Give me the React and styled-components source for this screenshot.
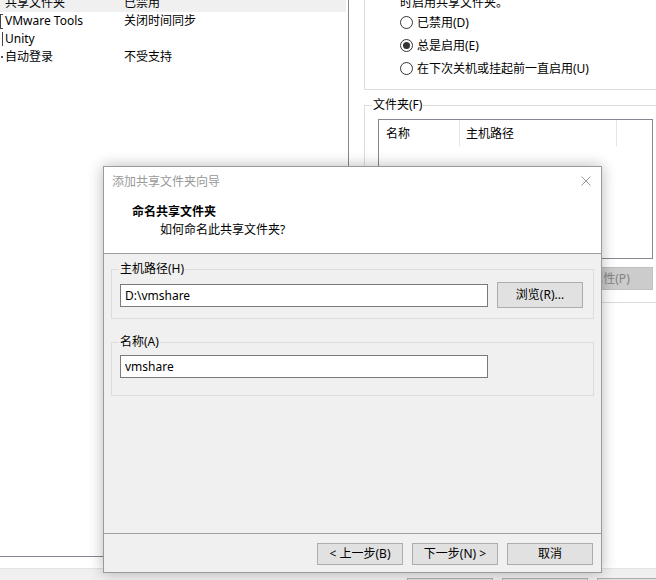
import React from 'react';
import styled, { createGlobalStyle } from 'styled-components';

const GlobalStyle = createGlobalStyle`
  html, body {
    margin: 0;
    padding: 0;
    background: #ffffff;
  }
  body {
    font-family: "Noto Sans", "Noto Sans CJK SC", sans-serif;
    font-size: 12px;
    color: #000000;
    overflow: hidden;
  }
`;

const Screen = styled.div`
  position: relative;
  width: 656px;
  height: 580px;
  overflow: hidden;
  background: #ffffff;
  display: flex;
  flex-direction: column;
`;

const Workspace = styled.div`
  display: flex;
  height: 568px;
`;

const SidePane = styled.div`
  width: 349px;
  height: 557px;
  box-sizing: border-box;
  border-right: 1px solid #828790;
  border-bottom: 1px solid #828790;
  overflow: hidden;
`;

// list is scrolled a little, the first row is partly hidden
const SettingList = styled.div`
  margin-top: -6px;
`;

const SettingRow = styled.div`
  display: flex;
  align-items: center;
  width: 346px;
  height: 18px;
  line-height: 18px;
  background: ${(p) => (p.$selected ? '#f0f0f0' : 'transparent')};
`;

const Marker = styled.span`
  flex: none;
  width: 5px;
  height: 18px;
  display: flex;
  align-items: center;

  &::before {
    content: '';
    display: block;
    box-sizing: border-box;
    ${(p) =>
      p.$kind === 'bracket' &&
      'width: 3px; height: 15px; border: 1px solid #444; border-right: none;'}
    ${(p) =>
      p.$kind === 'line' &&
      'width: 1px; height: 14px; margin-left: 2px; background: #444;'}
    ${(p) =>
      p.$kind === 'dot' &&
      'width: 2px; height: 2px; margin-left: 1px; background: #555;'}
  }
`;

const SettingName = styled.span`
  width: 119px;
  white-space: nowrap;
`;

const SettingValue = styled.span`
  white-space: nowrap;
`;

const DetailPane = styled.div`
  flex: 1;
  padding-left: 15px;
  overflow: hidden;
`;

const OptionGroup = styled.div`
  width: 320px;
  margin-top: -20px;
  padding: 14px 0 9px 35px;
  border: 1px solid #dcdcdc;
  line-height: 16px;
`;

const RadioRow = styled.div`
  display: flex;
  align-items: center;
  height: 23px;
  white-space: nowrap;
`;

const RadioCircle = styled.span`
  flex: none;
  box-sizing: border-box;
  width: 13px;
  height: 13px;
  margin-right: 4px;
  border: 1px solid #333333;
  border-radius: 50%;
  background: #ffffff;
  display: flex;
  align-items: center;
  justify-content: center;

  &::after {
    content: '';
    width: 7px;
    height: 7px;
    border-radius: 50%;
    background: ${(p) => (p.$checked ? '#333333' : 'transparent')};
  }
`;

const GroupBox = styled.fieldset`
  margin: ${(p) => p.$gap || 0}px 0 0 0;
  padding: ${(p) => p.$pad};
  min-width: 0;
  border: 1px solid #dcdcdc;
  width: ${(p) => p.$width || 'auto'};
  box-sizing: border-box;
`;

const GroupLabel = styled.legend`
  margin-left: ${(p) => p.$offset}px;
  padding: 0 1px;
  line-height: 16px;
`;

const ListView = styled.div`
  width: 275px;
  height: 140px;
  box-sizing: border-box;
  border: 1px solid #828790;
  background: #ffffff;
`;

const ListHeader = styled.div`
  display: grid;
  grid-template-columns: 81px 157px 1fr;
  height: 26px;
`;

const HeaderCell = styled.div`
  display: flex;
  align-items: center;
  padding-left: ${(p) => p.$indent || 0}px;
  border-right: ${(p) => (p.$last ? 'none' : '1px solid #e5e5e5')};
`;

const ListActions = styled.div`
  width: 275px;
  display: flex;
  justify-content: flex-end;
  margin-top: 8px;
`;

const WinButton = styled.button`
  box-sizing: border-box;
  width: ${(p) => p.$w || 86}px;
  height: ${(p) => p.$h || 22}px;
  padding: 0;
  font: inherit;
  line-height: 1;
  color: ${(p) => (p.$disabled ? '#838383' : '#000000')};
  background: ${(p) => (p.$disabled ? '#cccccc' : '#e1e1e1')};
  border: 1px solid ${(p) => (p.$disabled ? '#bfbfbf' : '#adadad')};
  flex: none;
`;

const TaskStrip = styled.div`
  height: 12px;
  box-sizing: border-box;
  border-top: 1px solid #e3e3e3;
  background: #f0f0f0;
  padding: 9px 0 0 407px;
  display: flex;
  gap: 9px;
`;

const Dialog = styled.div`
  position: absolute;
  left: 103px;
  top: 166px;
  width: 499px;
  height: 407px;
  box-sizing: border-box;
  border: 1px solid #9a9a9a;
  background: #f0f0f0;
  box-shadow: 0 0 14px rgba(0, 0, 0, 0.28);
  display: flex;
  flex-direction: column;
`;

const TitleBar = styled.div`
  height: 28px;
  flex: none;
  display: flex;
  align-items: center;
  justify-content: space-between;
  padding: 0 10px 1px 8px;
  background: #ffffff;
  color: #999999;
`;

const WizardHeader = styled.div`
  height: 58px;
  flex: none;
  box-sizing: border-box;
  padding: 7px 0 0 28px;
  background: #ffffff;
  border-bottom: 1px solid #a0a0a0;
  line-height: 18px;
`;

const StepTitle = styled.div`
  font-weight: bold;
`;

const StepHint = styled.div`
  padding-left: 28px;
`;

const WizardBody = styled.div`
  flex: 1;
  padding: 7px 7px 0 7px;
`;

const FieldRow = styled.div`
  display: flex;
  align-items: center;
  gap: 9px;
  height: 26px;
`;

const TextBox = styled.input`
  box-sizing: border-box;
  width: 368px;
  height: 23px;
  margin: 0;
  padding: 0 4px;
  border: 1px solid #7a7a7a;
  background: #ffffff;
  font: inherit;
  color: #000000;
  outline: none;
`;

const WizardFooter = styled.div`
  height: 39px;
  flex: none;
  box-sizing: border-box;
  border-top: 1px solid #a0a0a0;
  padding: 9px 8px 0 0;
  display: flex;
  justify-content: flex-end;
  gap: 9px;
`;

const CloseIcon = () => (
  <svg width="10" height="10" viewBox="0 0 10 10">
    <path d="M0.5 0.5 L9.5 9.5 M9.5 0.5 L0.5 9.5" stroke="#999999" strokeWidth="1" fill="none" />
  </svg>
);

const settings = [
  { name: '共享文件夹', value: '已禁用', selected: true },
  { name: 'VMware Tools', value: '关闭时间同步', marker: 'bracket' },
  { name: 'Unity', value: '', marker: 'line' },
  { name: '自动登录', value: '不受支持', marker: 'dot' },
];

const shareModes = [
  { label: '已禁用(D)' },
  { label: '总是启用(E)', checked: true },
  { label: '在下次关机或挂起前一直启用(U)' },
];

export default function App() {
  return (
    <>
      <GlobalStyle />
      <Screen>
        <Workspace>
          <SidePane>
            <SettingList>
              {settings.map((s) => (
                <SettingRow key={s.name} $selected={s.selected}>
                  <Marker $kind={s.marker} />
                  <SettingName>{s.name}</SettingName>
                  <SettingValue>{s.value}</SettingValue>
                </SettingRow>
              ))}
            </SettingList>
          </SidePane>

          <DetailPane>
            <OptionGroup>
              <div>时启用共享文件夹。</div>
              {shareModes.map((m) => (
                <RadioRow key={m.label}>
                  <RadioCircle $checked={m.checked} />
                  {m.label}
                </RadioRow>
              ))}
            </OptionGroup>

            <GroupBox $gap={7} $pad="6px 0 12px 13px" $width="320px">
              <GroupLabel $offset={-6}>文件夹(F)</GroupLabel>
              <ListView>
                <ListHeader>
                  <HeaderCell $indent={7}>名称</HeaderCell>
                  <HeaderCell $indent={6}>主机路径</HeaderCell>
                  <HeaderCell $last />
                </ListHeader>
              </ListView>
              <ListActions>
                <WinButton $w={85} $h={23} $disabled>属性(P)</WinButton>
              </ListActions>
            </GroupBox>
          </DetailPane>
        </Workspace>

        <TaskStrip>
          <WinButton $w={86} />
          <WinButton $w={86} />
          <WinButton $w={86} />
        </TaskStrip>

        <Dialog>
          <TitleBar>
            <span>添加共享文件夹向导</span>
            <CloseIcon />
          </TitleBar>
          <WizardHeader>
            <StepTitle>命名共享文件夹</StepTitle>
            <StepHint>如何命名此共享文件夹?</StepHint>
          </WizardHeader>
          <WizardBody>
            <GroupBox $pad="5px 0 10px 8px">
              <GroupLabel $offset={-1}>主机路径(H)</GroupLabel>
              <FieldRow>
                <TextBox readOnly defaultValue="D:\vmshare" />
                <WinButton $w={86} $h={26}>浏览(R)...</WinButton>
              </FieldRow>
            </GroupBox>
            <GroupBox $gap={15} $pad="5px 0 17px 8px">
              <GroupLabel $offset={-1}>名称(A)</GroupLabel>
              <TextBox readOnly defaultValue="vmshare" />
            </GroupBox>
          </WizardBody>
          <WizardFooter>
            <WinButton>&lt; 上一步(B)</WinButton>
            <WinButton>下一步(N) &gt;</WinButton>
            <WinButton>取消</WinButton>
          </WizardFooter>
        </Dialog>
      </Screen>
    </>
  );
}
